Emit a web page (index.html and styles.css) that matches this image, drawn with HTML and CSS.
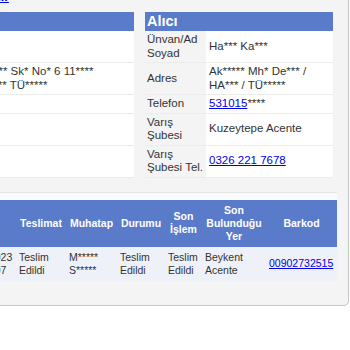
FILE: index.html
```html
<!DOCTYPE html>
<html lang="tr">
<head>
  <meta charset="UTF-8" />
  <meta name="viewport" content="width=device-width, initial-scale=1.0"/>
  <title>Gönderi Takip</title>
  <link rel="stylesheet" href="styles.css">
</head>
<body>

<div class="card">
  <div class="top"><a href="#">Gönderi Hareketleri Yazdır</a></div>

  <div class="parties">
    <table class="party">
      <col class="lbl"><col>
      <tr><th colspan="2">Gönderici</th></tr>
      <tr><td>Ünvan/Ad Soyad</td><td>Me*** Ya***</td></tr>
      <tr><td>Adres</td><td class="nowrap">Ak**** Mh* Ye*** Sk* No* 6 11****<br>Ba***** / İS****** TÜ*****</td></tr>
      <tr><td>Telefon</td><td><a href="#">532145</a>****</td></tr>
      <tr><td>Çıkış Şubesi</td><td>Merkez</td></tr>
      <tr><td>Çıkış Şubesi Tel.</td><td><a href="#">444 0562</a></td></tr>
    </table>

    <table class="party">
      <col class="lbl"><col>
      <tr><th colspan="2">Alıcı</th></tr>
      <tr><td>Ünvan/Ad Soyad</td><td>Ha*** Ka***</td></tr>
      <tr><td>Adres</td><td>Ak***** Mh* De*** / HA*** / TÜ*****</td></tr>
      <tr><td>Telefon</td><td><a href="#">531015</a>****</td></tr>
      <tr><td>Varış Şubesi</td><td>Kuzeytepe Acente</td></tr>
      <tr><td>Varış Şubesi Tel.</td><td><a href="#">0326 221 7678</a></td></tr>
    </table>
  </div>

  <div class="moves">
    <table class="hist">
      <col class="c-place"><col class="c-date"><col class="c-deliv"><col class="c-party">
      <col class="c-state"><col class="c-last"><col class="c-where"><col class="c-code">
      <tr>
        <th>İşlem Yeri</th>
        <th>Tarih</th>
        <th>Teslimat</th>
        <th>Muhatap</th>
        <th>Durumu</th>
        <th>Son İşlem</th>
        <th>Son Bulunduğu Yer</th>
        <th>Barkod</th>
      </tr>
      <tr>
        <td>Kuzeytepe</td>
        <td class="date">12.06.2023<br>14:32:07</td>
        <td>Teslim Edildi</td>
        <td>M***** S*****</td>
        <td>Teslim Edildi</td>
        <td>Teslim Edildi</td>
        <td>Beykent Acente</td>
        <td><a href="#">00902732515</a></td>
      </tr>
    </table>
  </div>
</div>

</body>
</html>
```

FILE: styles.css
```css
body { margin: 0; background: #fff; color: #333; font-family: "Liberation Sans", Arial, sans-serif; }
a { color: #0000ee; }

.card { margin: -15px 1px 0 -153px; padding: 4px 11px 24px; background: #f4f4f4; border: 1px solid #c6c6c6; border-radius: 0 0 5px 5px; }
.top { font-size: 12px; line-height: 15px; height: 15px; }
.top a { font-weight: bold; }

.parties { display: grid; grid-template-columns: 1fr 188px; gap: 11px; margin: 7px 4px 0 0; }
.party { width: 100%; border-collapse: collapse; table-layout: fixed; font-size: 11.5px; line-height: 13.5px; }
.party col.lbl { width: 61px; }
.party th { background: #5a7bc9; color: #fff; font-size: 14.5px; line-height: 17px; padding: 1px 2px; text-align: left; }
.party td { padding: 2px 1px 2px 2px; border-bottom: 1px solid #ececec; }
.party td + td { background: #fff; padding-left: 3px; }
.nowrap { white-space: nowrap; }

.moves { margin-top: 14px; border-top: 1px solid #e6e6e6; background: #fbfbfb; padding-top: 7px; }
.hist { width: 100%; border-collapse: collapse; table-layout: fixed; font-size: 10.5px; line-height: 13px; }
.hist th { background: #5a7bc9; color: #fff; padding: 4px 3px; text-align: center; }
.hist td { background: #eef1f7; padding: 4px 3px; text-align: left; }
.hist td.date { text-align: center; }
.c-place { width: 97px; }
.c-date { width: 60px; }
.c-deliv { width: 50px; }
.c-party { width: 51px; }
.c-state { width: 48px; }
.c-last { width: 37px; }
.c-where { width: 64px; }
.c-code { width: 71px; }
```
